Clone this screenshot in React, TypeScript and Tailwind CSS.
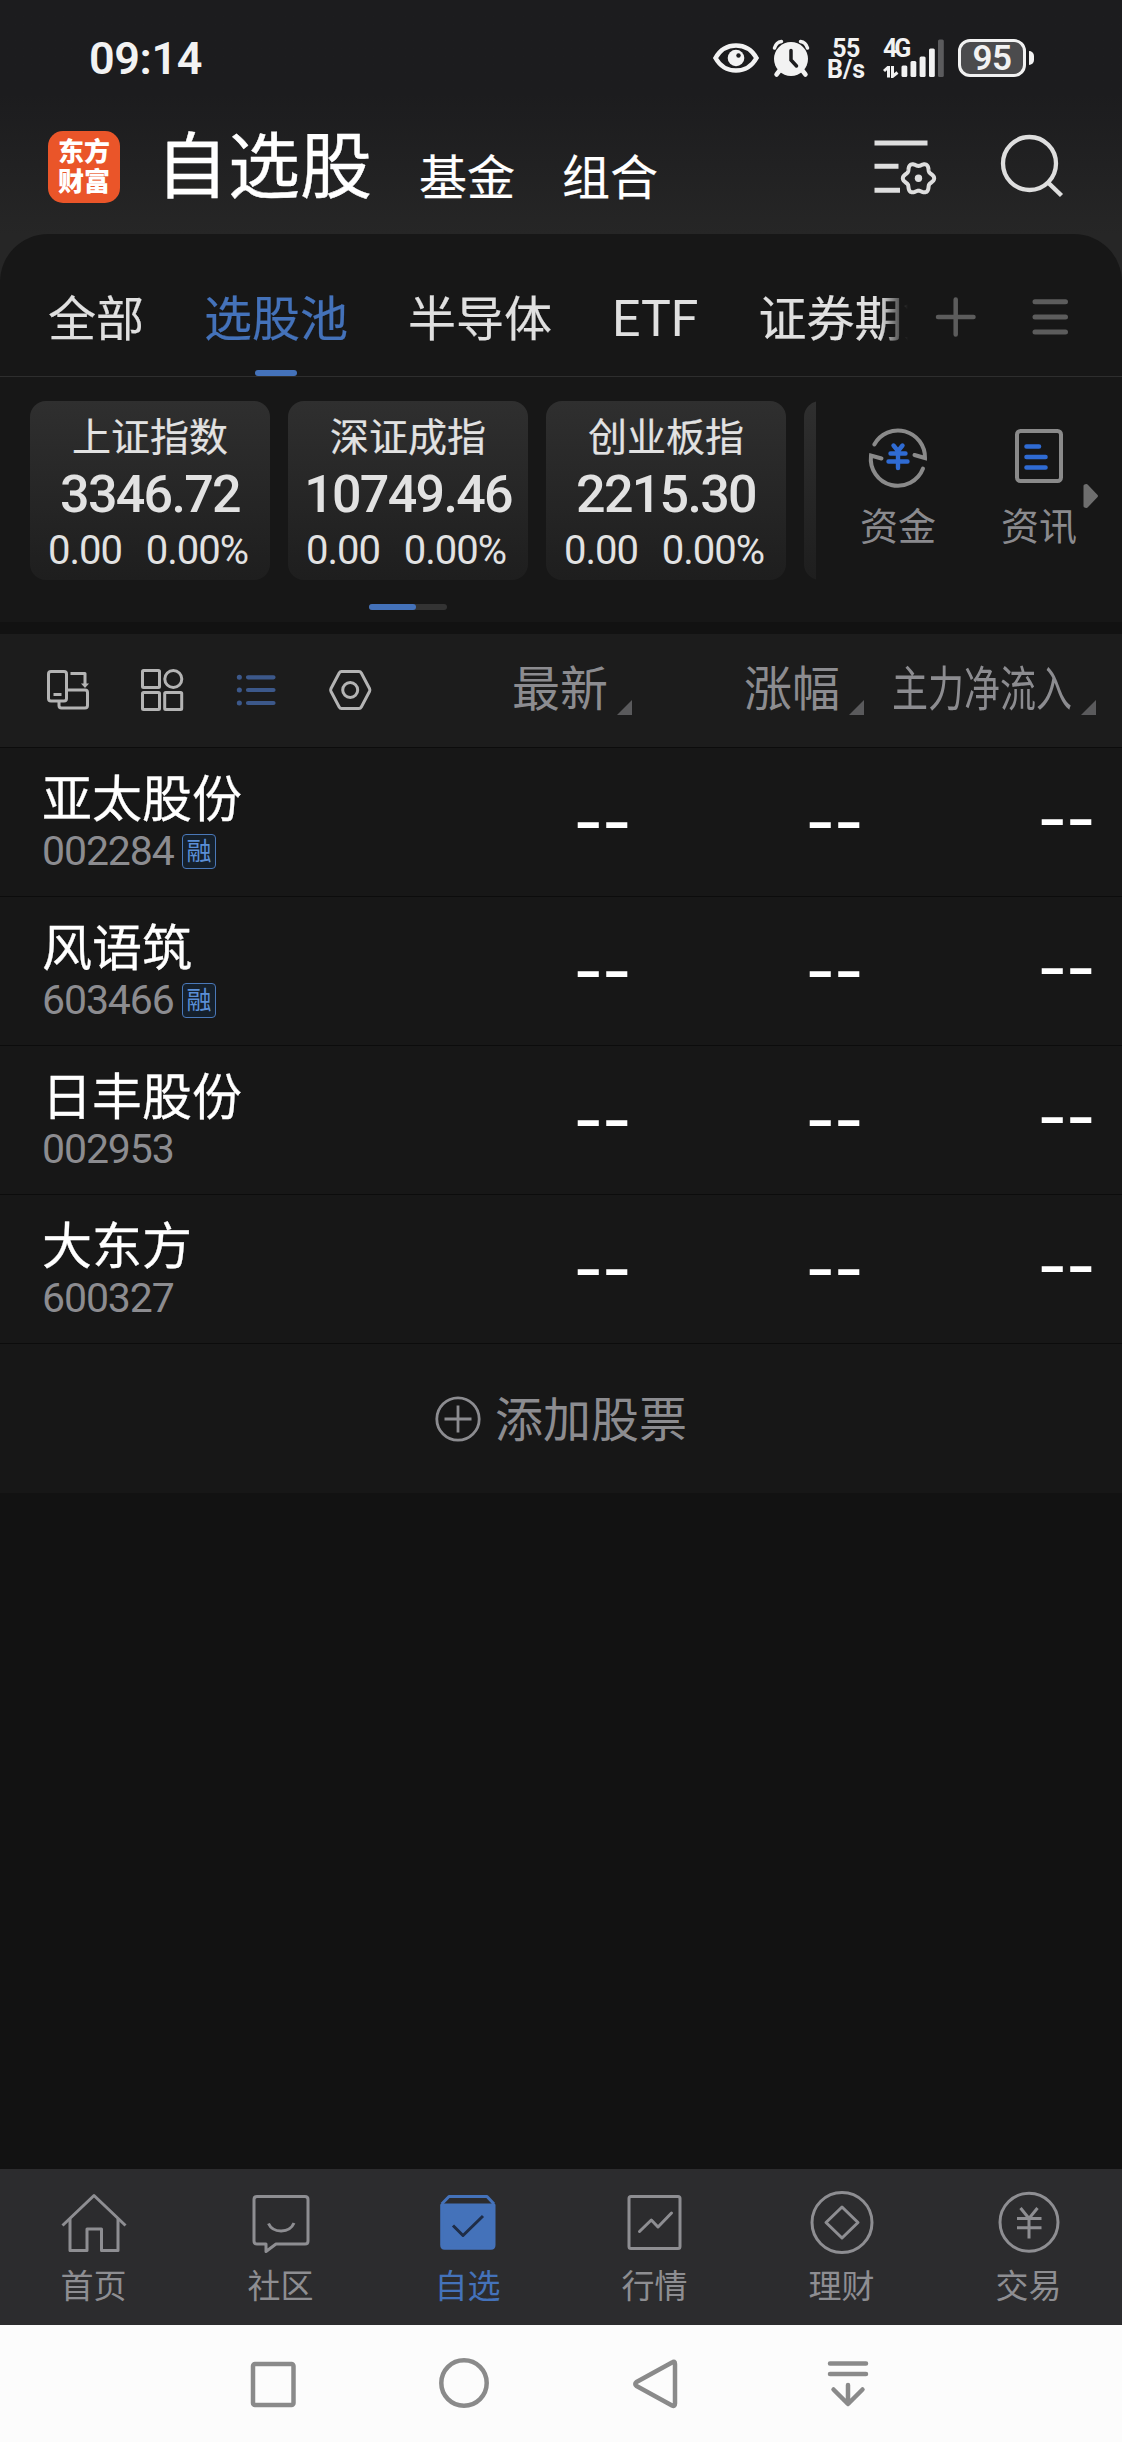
import type { ReactNode } from "react";

interface MarketIndex {
  name: string;
  value: string;
  change: string;
  percent: string;
}

interface Stock {
  name: string;
  code: string;
  margin?: boolean;
}

const indices: MarketIndex[] = [
  { name: "上证指数", value: "3346.72", change: "0.00", percent: "0.00%" },
  { name: "深证成指", value: "10749.46", change: "0.00", percent: "0.00%" },
  { name: "创业板指", value: "2215.30", change: "0.00", percent: "0.00%" },
];

const stocks: Stock[] = [
  { name: "亚太股份", code: "002284", margin: true },
  { name: "风语筑", code: "603466", margin: true },
  { name: "日丰股份", code: "002953" },
  { name: "大东方", code: "600327" },
];

// Scalloped outline of the settings gear
const gearPoints = Array.from({ length: 72 }, (_, i) => {
  const angle = (i / 72) * Math.PI * 2;
  const r = 14 + 1.7 * Math.cos(6 * angle);
  return `${(44.5 + r * Math.cos(angle)).toFixed(2)},${(40.3 + r * Math.sin(angle)).toFixed(2)}`;
}).join(" ");

function StatusBar() {
  return (
    <div className="flex h-[116px] items-center justify-between pl-[89px] pr-[88px] text-[#f2f2f2]">
      <span className="text-[45px] leading-none font-semibold tracking-[-0.4px]">09:14</span>
      <div className="flex h-10 items-center">
        <svg className="h-8 w-[46px]" viewBox="0 0 46 32" fill="none">
          <path d="M2.5 16C7 8 14 3.5 23 3.5S39 8 43.500 16C39 24 32 28.500 23 28.500S7 24 2.500 16Z" stroke="currentColor" strokeWidth="4.500" />
          <circle cx="23" cy="16" r="8.300" fill="currentColor" />
          <circle cx="25.500" cy="13.500" r="2.200" fill="#1c1c1e" />
        </svg>
        <svg className="ml-[13px] h-10 w-[38px]" viewBox="0 0 38 40">
          <g fill="none" stroke="currentColor" strokeLinecap="round">
            <path d="M2.500 10C3.500 6.500 6 4 9.500 3.500M35.500 10C34.500 6.500 32 4 28.500 3.500" strokeWidth="3.500" />
            <path d="M8 32L4.500 36.500M30 32L33.500 36.500" strokeWidth="4.500" />
          </g>
          <circle cx="19" cy="21" r="17" fill="currentColor" />
          <path d="M19 12.500V22L24.500 28" fill="none" stroke="#1c1c1e" strokeWidth="3.500" strokeLinecap="round" />
        </svg>
        <div className="ml-4 flex w-10 flex-col items-center pt-0.5 text-[25px] leading-[21px] font-bold">
          <span className="tracking-[-0.5px]">55</span>
          <span>B/s</span>
        </div>
        <div className="ml-[17px] flex h-10 w-[62px] items-stretch">
          <div className="flex w-[18px] flex-col pt-px">
            <span className="text-[25px] leading-5 font-bold tracking-[-3px]">4G</span>
            <svg className="mt-[7px] h-3 w-4" viewBox="0 0 16 12" fill="none" stroke="currentColor" strokeWidth="3">
              <path d="M1 5L5.500 1V11.500M9.500 0V10.500L14.500 6.500" />
            </svg>
          </div>
          <svg className="h-10 w-11" viewBox="0 0 44 40" fill="currentColor">
            <rect x="0.500" y="27.500" width="5.800" height="11.500" rx="1.500" />
            <rect x="9.500" y="23" width="5.800" height="16" rx="1.500" />
            <rect x="18.600" y="18.500" width="6" height="20.500" rx="1.500" />
            <rect x="28" y="10.500" width="5.800" height="28.500" rx="1.500" />
            <rect x="37" y="1.500" width="5.800" height="37.500" rx="1.500" fill="#5b5b5d" />
          </svg>
        </div>
        <div className="ml-[13px] flex items-center gap-[3px]">
          <div className="flex h-[38px] w-[68px] items-center justify-center rounded-[12px] border-[3.5px] border-[#f2f2f2] bg-[#4b4b4d]">
            <span className="text-[35px] leading-none font-semibold tracking-[-0.5px]">95</span>
          </div>
          <span className="h-3.5 w-[5px] rounded-r-full rounded-l-sm bg-[#f2f2f2]" />
        </div>
      </div>
    </div>
  );
}

function Header() {
  return (
    <div className="flex h-[118px] items-start pl-12 text-white">
      <div className="mt-[15px] flex h-[72px] w-[72px] flex-col items-center justify-center rounded-[15px] bg-[#ea5529] text-[26px] leading-[30px] font-black">
        <span>东方</span>
        <span>财富</span>
      </div>
      <h1 className="mt-4 ml-9 text-[72px] leading-[72px] [-webkit-text-stroke:0.4px]">自选股</h1>
      <span className="mt-[39px] ml-[47px] text-[48px] leading-[48px] [-webkit-text-stroke:0.2px]">基金</span>
      <span className="mt-[39px] ml-[47px] text-[48px] leading-[48px] [-webkit-text-stroke:0.2px]">组合</span>
      <div className="ml-auto flex pt-[22px] pr-[54px] text-[#dedede]">
        <svg className="h-[60px] w-[66px]" viewBox="0 0 66 60" fill="none" stroke="currentColor" strokeWidth="5">
          <path d="M0.500 5H53.500M0.500 28.300H24.500M0.500 52.300H26" />
          <polygon points={gearPoints} strokeWidth="4" strokeLinejoin="round" />
          <circle cx="44.500" cy="40.300" r="3.700" fill="currentColor" stroke="none" />
        </svg>
        <svg className="ml-[59px] h-[64px] w-[69px] overflow-visible" viewBox="0 0 69 64" fill="none" stroke="currentColor" strokeWidth="4.300">
          <circle cx="30.500" cy="25.500" r="26.500" />
          <path d="M49 44.500L62.500 57.500" strokeWidth="4.500" />
        </svg>
      </div>
    </div>
  );
}

function GroupTabs() {
  return (
    <div className="flex h-[143px] border-b border-[#2e2e2e]">
      <div className="flex w-[910px] shrink-0 gap-[60px] overflow-hidden pl-12 text-[48px] whitespace-nowrap text-[#e0e0e0] [mask-image:linear-gradient(to_right,black_880px,transparent_908px)] [-webkit-text-stroke:0.2px]">
        <span className="leading-[171px]">全部</span>
        <div className="flex flex-col items-center text-[#4472ba]">
          <span className="h-[136px] leading-[171px]">选股池</span>
          <span className="h-1.5 w-[42px] rounded-full bg-[#4472ba]" />
        </div>
        <span className="leading-[171px]">半导体</span>
        <span className="text-[50px] leading-[171px] [-webkit-text-stroke:0px]">ETF</span>
        <span className="leading-[171px]">证券期货</span>
      </div>
      <svg className="mt-[59px] ml-[21px] h-12 w-12" viewBox="0 0 48 48" stroke="#5c5c5c" strokeWidth="4.500" strokeLinecap="round">
        <path d="M7 24H42.500M24.700 6.500V41.500" />
      </svg>
      <svg className="mt-[59px] ml-12 h-12 w-12" viewBox="0 0 48 48" stroke="#5c5c5c" strokeWidth="5" strokeLinecap="round">
        <path d="M8 8.800H38.500M8 24H38.500M8 39H38.500" />
      </svg>
    </div>
  );
}

function IndexCard({ index }: { index: MarketIndex }) {
  return (
    <div className="flex h-[179px] w-60 shrink-0 flex-col items-center rounded-2xl bg-linear-to-b from-[#2f2f2f] to-[#1e1e1e] text-[#e2e2e2]">
      <span className="mt-[18px] text-[39px] leading-[39px] [-webkit-text-stroke:0.2px]">{index.name}</span>
      <span className="mt-2.5 text-[52px] leading-[54px] font-medium tracking-[-1.7px]">{index.value}</span>
      <div className="mt-[9px] flex w-full justify-between pr-[22px] pl-[18px] text-[40px] leading-[40px] tracking-[-1px]">
        <span>{index.change}</span>
        <span>{index.percent}</span>
      </div>
    </div>
  );
}

function MarketStrip() {
  return (
    <div className="h-[245px] pt-6">
      <div className="flex h-[179px]">
        <div className="flex w-[816px] shrink-0 gap-[18px] overflow-hidden pl-[30px]">
          {indices.map((index) => (
            <IndexCard key={index.name} index={index} />
          ))}
          <div className="h-[179px] w-60 shrink-0 rounded-2xl bg-linear-to-b from-[#2f2f2f] to-[#1e1e1e]" />
        </div>
        <div className="flex flex-1 text-[38px] leading-[38px] text-[#8a8a8e]">
          <div className="ml-[42px] flex w-20 flex-col items-center">
            <svg className="mt-[21px] h-[68px] w-[68px]" viewBox="0 0 68 68" fill="none" stroke="#8a8a8a" strokeWidth="4">
              <path d="M10.300 22.500A27 27 0 0 1 61 36L50.500 33" strokeLinecap="round" />
              <path d="M59 46.500A27 27 0 0 1 7 33.500L17.500 36.500" strokeLinecap="round" />
              <path d="M29.500 23.500L34 29L38.500 23.500M34 29V46M26.500 31.500H41.500M24.500 39.500H43.500" stroke="#2f6bd3" strokeWidth="4.400" strokeLinecap="round" />
            </svg>
            <span className="mt-[18px]">资金</span>
          </div>
          <div className="ml-[61px] flex w-20 flex-col items-center">
            <svg className="mt-[21px] h-[68px] w-[68px]" viewBox="0 0 68 68" fill="none" stroke="#8a8a8a" strokeWidth="4">
              <rect x="12" y="9" width="44" height="50" rx="3.500" />
              <path d="M21.500 24.500H34M21.500 35H40.500M21.500 45.500H40.500" stroke="#2f6bd3" strokeWidth="4.600" strokeLinecap="round" />
            </svg>
            <span className="mt-[18px]">资讯</span>
          </div>
          <svg className="mt-[82px] ml-1 h-[26px] w-4" viewBox="0 0 16 26" fill="#6e6e6e" stroke="#6e6e6e" strokeWidth="3" strokeLinejoin="round">
            <path d="M2 3L3.500 2.500L13.500 13L3.500 23.500L2 23Z" />
          </svg>
        </div>
      </div>
      <div className="mt-6 ml-[369px] h-1.5 w-[78px] rounded-full bg-[#333333]">
        <div className="h-1.5 w-[47px] rounded-full bg-[#4472ba]" />
      </div>
    </div>
  );
}

function SortMark() {
  return (
    <svg className="mt-1.5 ml-[9px] h-[15px] w-[15px] translate-y-[14px] self-center" viewBox="0 0 15 15" fill="#5a5a5c">
      <path d="M15 0V15H0Z" />
    </svg>
  );
}

function ListHeader() {
  return (
    <div className="flex h-[114px] items-center border-b border-[#0c0c0c] bg-[#1c1c1c] pr-[26px] pl-11 text-[48px] leading-[48px] text-[#8c8c90]">
      <div className="-mt-0.5 flex gap-[46px] text-[#b4b4b4]">
        <svg className="h-12 w-12" viewBox="0 0 48 48" fill="none" stroke="currentColor" strokeWidth="3" strokeLinejoin="round">
          <rect x="4.500" y="5.500" width="18" height="29.500" rx="2.500" />
          <path d="M9.500 28.500H17.500M26.500 7.500H41V18" />
          <path d="M37 17.500H45L41 22Z" fill="currentColor" stroke="none" />
          <path d="M22.500 24H41Q43.500 24 43.500 26.500V39.500Q43.500 42 41 42H17.500Q15 42 15 39.500V35" />
        </svg>
        <svg className="h-12 w-12" viewBox="0 0 48 48" fill="none" stroke="currentColor" strokeWidth="3">
          <rect x="4.500" y="4.500" width="17" height="17" rx="1" />
          <circle cx="35.300" cy="13" r="8.500" />
          <rect x="4.500" y="26.500" width="17" height="17" rx="1" />
          <rect x="26.700" y="26.500" width="17" height="17" rx="1" />
        </svg>
        <svg className="h-12 w-12" viewBox="0 0 48 48" fill="none" stroke="#3c588a" strokeWidth="4.200" strokeLinecap="round">
          <path d="M7.300 11.300H7.400M7.300 24H7.400M7.300 37H7.400" strokeWidth="5" />
          <path d="M16 11.300H41.500M16 24H41.500M16 37H41.500" />
        </svg>
        <svg className="h-12 w-12" viewBox="0 0 48 48" fill="none" stroke="currentColor" strokeWidth="3" strokeLinejoin="round">
          <path d="M15.500 5.500H33Q34.500 5.500 35.300 7L43.500 22.500Q44.200 24 43.500 25.500L35.300 41Q34.500 42.500 33 42.500H15.500Q14 42.500 13.200 41L5 25.500Q4.300 24 5 22.500L13.200 7Q14 5.500 15.500 5.500Z" />
          <circle cx="24.200" cy="24" r="7.500" />
        </svg>
      </div>
      <div className="ml-auto flex h-full items-center">
        <div className="flex w-[232px] items-center justify-end">
          <span className="-mt-0.5">最新</span>
          <SortMark />
        </div>
        <div className="flex w-[232px] items-center justify-end">
          <span className="-mt-0.5">涨幅</span>
          <SortMark />
        </div>
        <div className="flex w-[232px] items-center justify-end">
          <span className="-mt-0.5 w-[180px] origin-left scale-x-75 whitespace-nowrap">主力净流入</span>
          <SortMark />
        </div>
      </div>
    </div>
  );
}

function StockRow({ stock }: { stock: Stock }) {
  return (
    <div className="flex h-[149px] border-b border-[#0c0c0c] pr-[27px] pl-[42px]">
      <div className="flex-1">
        <p className="mt-[27px] text-[50px] leading-[50px] text-white [-webkit-text-stroke:0.3px]">{stock.name}</p>
        <div className="mt-1.5 flex items-center text-[#8c8c90]">
          <span className="w-[131px] text-[41px] leading-[41px] tracking-[-1.1px]">{stock.code}</span>
          {stock.margin && (
            <span className="ml-[9px] flex h-[35px] w-[34px] items-center justify-center rounded border border-[#4a78b8] bg-[#15202c] text-[25px] leading-none text-[#5b8fd6]">
              融
            </span>
          )}
        </div>
      </div>
      <div className="flex text-right font-['Noto_Sans_CJK_SC',sans-serif] text-[82px] leading-[129px] text-white">
        <span className="w-[232px]">--</span>
        <span className="w-[232px]">--</span>
        <span className="w-[232px] -translate-y-[3px]">--</span>
      </div>
    </div>
  );
}

function NavItem({ label, active, children }: { label: string; active?: boolean; children: ReactNode }) {
  return (
    <div className={`flex w-[187px] flex-col items-center pt-[19px] ${active ? "text-[#4472ba]" : "text-[#8e8e92]"}`}>
      <svg className="h-[70px] w-[70px]" viewBox="0 0 70 70" fill="none" stroke="currentColor" strokeWidth="3" strokeLinejoin="round">
        {children}
      </svg>
      <span className="mt-3 text-[33px] leading-[33px]">{label}</span>
    </div>
  );
}

function BottomNav() {
  return (
    <div className="flex h-[156px] justify-center bg-[#2c2c2e]">
      <NavItem label="首页">
        <path d="M3.500 37.500L35 7.500L66.500 37.500" />
        <path d="M11 31V62.500H28V41H42.500V62.500H59V31" />
      </NavItem>
      <NavItem label="社区">
        <path d="M11 8.500H59Q62 8.500 62 11.500V53Q62 56 59 56H30L20 63.500V56H11Q8 56 8 53V11.500Q8 8.500 11 8.500Z" />
        <path d="M22.500 35.500C27 45.500 43.500 45.500 48 35" />
      </NavItem>
      <NavItem label="自选" active>
        <path d="M8.700 16L16 8.500H54L61 16" />
        <path d="M8.700 17H61V57Q61 60.300 58 60.300H11.700Q8.700 60.300 8.700 57Z" fill="currentColor" />
        <path d="M20 37.500L30 47.500L50 28" stroke="#1f2d47" />
      </NavItem>
      <NavItem label="行情">
        <rect x="9" y="8.500" width="51" height="52" rx="2" />
        <path d="M19.500 43.500L31.300 32L38 39L51.500 25" strokeLinecap="round" />
      </NavItem>
      <NavItem label="理财">
        <circle cx="35" cy="34.500" r="30" />
        <path d="M35 19L51 34.500L35 50L19 34.500Z" />
      </NavItem>
      <NavItem label="交易">
        <circle cx="35" cy="34.300" r="29" />
        <path d="M26.500 20L35 30.500L43.500 20M35 30.500V50.500M23 30.500H47.500M23 39.700H47.500" />
      </NavItem>
    </div>
  );
}

function SystemNav() {
  return (
    <div className="flex h-[117px] gap-[131.5px] bg-[#fcfcfc] pt-[29px] pl-[243px]">
      <svg className="h-[60px] w-[60px]" viewBox="0 0 60 60" fill="none" stroke="#8a8a8a" strokeWidth="4.500">
        <rect x="10" y="10" width="40.500" height="41" rx="2" />
      </svg>
      <svg className="h-[60px] w-[60px]" viewBox="0 0 60 60" fill="none" stroke="#8a8a8a" strokeWidth="4.500">
        <circle cx="29" cy="29" r="22.700" />
      </svg>
      <svg className="h-[60px] w-[60px]" viewBox="0 0 60 60" fill="none" stroke="#8a8a8a" strokeWidth="4.500" strokeLinejoin="round">
        <path d="M46 8.500Q49 6.500 49 10V49.500Q49 53 46 51.500L10.500 32Q8 30 10.500 28Z" />
      </svg>
      <svg className="h-[60px] w-[60px]" viewBox="0 0 60 60" fill="none" stroke="#8a8a8a" strokeWidth="4.500" strokeLinecap="round" strokeLinejoin="round">
        <path d="M12 9.500H48M12 20H48M30 31V49.500M15.500 35.500L30 50L44.500 35.500" />
      </svg>
    </div>
  );
}

export default function App() {
  return (
    <div className="flex h-[2442px] w-[1122px] flex-col overflow-hidden bg-[#121212] font-[Roboto,'Noto_Sans_CJK_SC',sans-serif]">
      <div className="bg-linear-to-b from-[#1c1c1e] from-40% to-[#262626]">
        <StatusBar />
        <Header />
        {/* Rounded top edge of the watchlist panel sits on the header gradient */}
        <div className="-mb-12 h-12 bg-[#262626]" />
      </div>
      <div className="relative rounded-t-[48px] bg-[#171717]">
        <GroupTabs />
        <MarketStrip />
      </div>
      <div className="mt-3">
        <ListHeader />
        <div className="bg-[#171717]">
          {stocks.map((stock) => (
            <StockRow key={stock.code} stock={stock} />
          ))}
          <div className="flex h-[149px] items-center justify-center gap-3.5 text-[48px] leading-[48px] text-[#8c8c90]">
            <svg className="h-[46px] w-[46px]" viewBox="0 0 46 46" fill="none" stroke="currentColor" strokeWidth="2.800">
              <circle cx="23" cy="23" r="21.200" />
              <path d="M9.500 23H36.500M23 9.500V36.500" />
            </svg>
            <span className="mt-1">添加股票</span>
          </div>
        </div>
      </div>
      <div className="mt-auto">
        <BottomNav />
        <SystemNav />
      </div>
    </div>
  );
}
